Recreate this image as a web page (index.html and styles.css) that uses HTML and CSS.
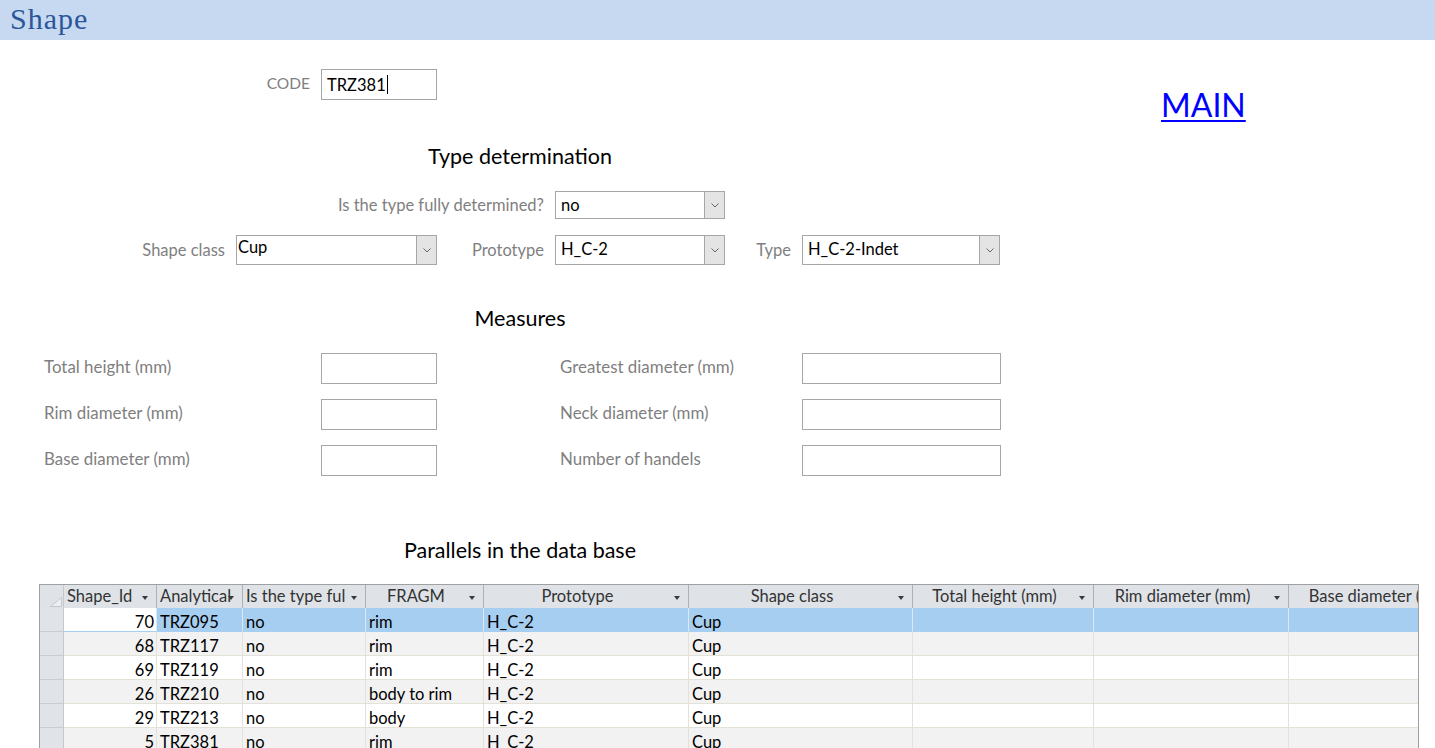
FILE: index.html
```html
<!DOCTYPE html>
<html lang="en">
<head>
<meta charset="utf-8">
<title>Shape</title>
<link rel="stylesheet" href="styles.css">
</head>
<body>
<header class="titlebar"><h1 class="title">Shape</h1></header>

<main class="form">
  <div class="code-row">
    <span class="lbl lbl-code">CODE</span>
    <div class="textbox tb-code">TRZ381<span class="caret"></span></div>
    <a class="main-link" href="#">MAIN</a>
  </div>

  <h2 class="section sec-type">Type determination</h2>

  <div class="row row-det">
    <span class="lbl lbl-det">Is the type fully determined?</span>
    <div class="combo cb-det"><span class="cb-text">no</span><span class="cb-btn"><svg width="8" height="5" viewBox="0 0 8 5"><path d="M0.5 0.5 L4 4 L7.5 0.5" stroke="#666" fill="none"/></svg></span></div>
  </div>

  <div class="row row-class">
    <span class="lbl lbl-class">Shape class</span>
    <div class="combo cb-class"><span class="cb-text tight">Cup</span><span class="cb-btn"><svg width="8" height="5" viewBox="0 0 8 5"><path d="M0.5 0.5 L4 4 L7.5 0.5" stroke="#666" fill="none"/></svg></span></div>
    <span class="lbl lbl-proto">Prototype</span>
    <div class="combo cb-proto"><span class="cb-text">H_C-2</span><span class="cb-btn"><svg width="8" height="5" viewBox="0 0 8 5"><path d="M0.5 0.5 L4 4 L7.5 0.5" stroke="#666" fill="none"/></svg></span></div>
    <span class="lbl lbl-type">Type</span>
    <div class="combo cb-type"><span class="cb-text">H_C-2-Indet</span><span class="cb-btn"><svg width="8" height="5" viewBox="0 0 8 5"><path d="M0.5 0.5 L4 4 L7.5 0.5" stroke="#666" fill="none"/></svg></span></div>
  </div>

  <h2 class="section sec-measures">Measures</h2>

  <div class="measures">
    <div class="mrow">
      <span class="lbl mlbl-l">Total height (mm)</span>
      <div class="textbox tb-small"></div>
      <span class="lbl mlbl-r">Greatest diameter (mm)</span>
      <div class="textbox tb-wide"></div>
    </div>
    <div class="mrow">
      <span class="lbl mlbl-l">Rim diameter (mm)</span>
      <div class="textbox tb-small"></div>
      <span class="lbl mlbl-r">Neck diameter (mm)</span>
      <div class="textbox tb-wide"></div>
    </div>
    <div class="mrow">
      <span class="lbl mlbl-l">Base diameter (mm)</span>
      <div class="textbox tb-small"></div>
      <span class="lbl mlbl-r">Number of handels</span>
      <div class="textbox tb-wide"></div>
    </div>
  </div>

  <h2 class="section sec-par">Parallels in the data base</h2>

  <div class="datasheet">
    <div class="ds-row ds-head">
      <div class="c c-sel"><svg class="selall" width="12" height="10" viewBox="0 0 12 10"><path d="M0.5 9.5 L11.5 0.5 L11.5 9.5 Z" fill="#eceef1" stroke="#c4c8cd"/></svg></div>
      <div class="c h-left"><span class="htxt">Shape_Id</span><i class="arr"></i></div>
      <div class="c h-left"><span class="htxt">Analytical</span><i class="arr"></i></div>
      <div class="c h-left"><span class="htxt">Is the type fully determined?</span><i class="arr"></i></div>
      <div class="c h-center"><span class="htxt">FRAGM</span><i class="arr"></i></div>
      <div class="c h-center"><span class="htxt">Prototype</span><i class="arr"></i></div>
      <div class="c h-center"><span class="htxt">Shape class</span><i class="arr"></i></div>
      <div class="c h-center"><span class="htxt">Total height (mm)</span><i class="arr"></i></div>
      <div class="c h-center"><span class="htxt">Rim diameter (mm)</span><i class="arr"></i></div>
      <div class="c h-center"><span class="htxt">Base diameter (mm)</span><i class="arr"></i></div>
    </div>

    <div class="ds-row selected">
      <div class="c c-sel"></div>
      <div class="c num current">70</div>
      <div class="c">TRZ095</div><div class="c">no</div><div class="c">rim</div><div class="c">H_C-2</div><div class="c">Cup</div><div class="c"></div><div class="c"></div><div class="c"></div>
    </div>
    <div class="ds-row alt">
      <div class="c c-sel"></div>
      <div class="c num">68</div>
      <div class="c">TRZ117</div><div class="c">no</div><div class="c">rim</div><div class="c">H_C-2</div><div class="c">Cup</div><div class="c"></div><div class="c"></div><div class="c"></div>
    </div>
    <div class="ds-row">
      <div class="c c-sel"></div>
      <div class="c num">69</div>
      <div class="c">TRZ119</div><div class="c">no</div><div class="c">rim</div><div class="c">H_C-2</div><div class="c">Cup</div><div class="c"></div><div class="c"></div><div class="c"></div>
    </div>
    <div class="ds-row alt">
      <div class="c c-sel"></div>
      <div class="c num">26</div>
      <div class="c">TRZ210</div><div class="c">no</div><div class="c">body to rim</div><div class="c">H_C-2</div><div class="c">Cup</div><div class="c"></div><div class="c"></div><div class="c"></div>
    </div>
    <div class="ds-row">
      <div class="c c-sel"></div>
      <div class="c num">29</div>
      <div class="c">TRZ213</div><div class="c">no</div><div class="c">body</div><div class="c">H_C-2</div><div class="c">Cup</div><div class="c"></div><div class="c"></div><div class="c"></div>
    </div>
    <div class="ds-row alt">
      <div class="c c-sel"></div>
      <div class="c num">5</div>
      <div class="c">TRZ381</div><div class="c">no</div><div class="c">rim</div><div class="c">H_C-2</div><div class="c">Cup</div><div class="c"></div><div class="c"></div><div class="c"></div>
    </div>
  </div>
</main>
</body>
</html>
```

FILE: styles.css
```css
* { box-sizing: border-box; }

html, body {
  margin: 0;
  padding: 0;
  background: #ffffff;
  overflow: hidden;
}

body {
  width: 1435px;
  height: 748px;
  font-family: Lato, "Liberation Sans", sans-serif;
  font-size: 16.5px;
  color: #000;
}

/* ---------- title bar ---------- */
.titlebar {
  height: 40px;
  background: #c6d9f0;
  padding-left: 10px;
}
.title {
  margin: 0;
  font-family: "Liberation Serif", "DejaVu Serif", serif;
  font-weight: 400;
  font-size: 30px;
  line-height: 38px;
  letter-spacing: 1px;
  color: #2b579a;
}

/* ---------- generic controls ---------- */
.lbl {
  color: #7f7f7f;
  white-space: nowrap;
}

.textbox {
  border: 1px solid #a6a6a6;
  background: #fff;
  height: 31px;
}

.combo {
  display: flex;
  border: 1px solid #a6a6a6;
  background: #fff;
}
.cb-text {
  flex: 1;
  padding-left: 5px;
  line-height: 26px;
  white-space: nowrap;
  overflow: hidden;
}
.cb-text.tight { padding-left: 1px; line-height: 22px; }
.cb-btn {
  width: 20px;
  flex: none;
  background: #e4e4e4;
  border-left: 1px solid #a6a6a6;
  display: flex;
  align-items: center;
  justify-content: center;
}

/* ---------- code row ---------- */
.code-row {
  display: flex;
  align-items: flex-start;
  height: 31px;
  margin-top: 29px;
}
.lbl-code {
  width: 310px;
  text-align: right;
  line-height: 28px;
  font-size: 15.5px;
}
.tb-code {
  width: 116px;
  margin-left: 11px;
  padding-left: 5px;
  line-height: 28px;
  display: flex;
  align-items: center;
}
.caret {
  display: inline-block;
  width: 1px;
  height: 19px;
  background: #000;
  margin-left: 1px;
}
.main-link {
  margin-left: 724px;
  margin-top: 16px;
  font-size: 32px;
  line-height: 40px;
  color: #0000ff;
  text-decoration: underline;
  text-decoration-thickness: 2px;
  text-underline-offset: 3px;
}

/* ---------- section headings ---------- */
.section {
  width: 1040px;
  margin: 0;
  text-align: center;
  font-weight: 400;
  font-size: 21.5px;
  line-height: 24px;
  color: #000;
}
.sec-type { margin-top: 44px; }
.sec-measures { margin-top: 41px; }
.sec-par { margin-top: 62px; }

/* ---------- type rows ---------- */
.row {
  display: flex;
  align-items: center;
}
.row-det { margin-top: 23px; }
.row-class { margin-top: 16px; }

.lbl-det { width: 544px; text-align: right; margin-right: 11px; }
.cb-det { width: 170px; height: 28px; }

.lbl-class { width: 225px; text-align: right; margin-right: 11px; }
.cb-class { width: 201px; height: 30px; }
.lbl-proto { width: 107px; text-align: right; margin-right: 11px; }
.cb-proto { width: 170px; height: 30px; }
.lbl-type { width: 66px; text-align: right; margin-right: 11px; }
.cb-type { width: 198px; height: 30px; }
.cb-proto .cb-text, .cb-type .cb-text { line-height: 27px; }

/* ---------- measures ---------- */
.measures {
  margin-top: 23px;
  display: flex;
  flex-direction: column;
  gap: 15px;
}
.mrow {
  display: flex;
  align-items: center;
}
.mrow .lbl { padding-bottom: 4px; font-size: 16.9px; }
.mlbl-l { width: 321px; padding-left: 44px; }
.tb-small { width: 116px; }
.mlbl-r { width: 242px; margin-left: 123px; }
.tb-wide { width: 199px; }

/* ---------- datasheet ---------- */
.datasheet {
  margin-top: 22px;
  margin-left: 39px;
  width: 1380px;
  border: 1px solid #a0a0a0;
  border-bottom: none;
  overflow: hidden;
  height: 200px;
}
.ds-row {
  display: grid;
  grid-template-columns: 24px 93px 86px 123px 118px 205px 224px 181px 195px 200px;
  width: 1449px;
  height: 24px;
  background: #fff;
}
.ds-row.alt { background: #f2f2f2; }

.c {
  border-right: 1px solid #e4e1d7;
  border-bottom: 1px solid #e4e1d7;
  padding: 4px 3px 0 3px;
  line-height: 20px;
  white-space: nowrap;
  overflow: hidden;
}
.c.num { text-align: right; padding-right: 2px; }

.c-sel {
  background: #e0e3e8;
  border-right: 1px solid #c4c8ce;
  border-bottom: 1px solid #c9cdd3;
}

.selected .c { background: #a6cef0; border-right-color: #dce9f5; border-bottom-color: #a6cef0; }
.selected .c.c-sel { background: #e0e3e8; border-right-color: #c4c8ce; border-bottom-color: #c9cdd3; }
.selected .c.current { background: #fff; }

.ds-head {
  height: 23px;
  background: #dfe3e8;
}
.ds-head .c {
  position: relative;
  border-right: 1px solid #adb1b7;
  border-bottom: none;
  padding: 0 20px 0 3px;
  line-height: 23px;
  color: #333;
  background: #dfe3e8;
}
.ds-head .c-sel {
  border-right: 1px solid #c4c8ce;
  padding: 0;
}
.selall {
  position: absolute;
  left: 10px;
  top: 12px;
}
.h-center { text-align: center; }
.htxt {
  display: block;
  overflow: hidden;
  white-space: nowrap;
}
.h-left:nth-child(3) .htxt { margin-right: -12px; }
.arr {
  position: absolute;
  right: 8px;
  top: 11px;
  width: 0;
  height: 0;
  border-left: 3.5px solid transparent;
  border-right: 3.5px solid transparent;
  border-top: 4px solid #3a3a3a;
}
```
